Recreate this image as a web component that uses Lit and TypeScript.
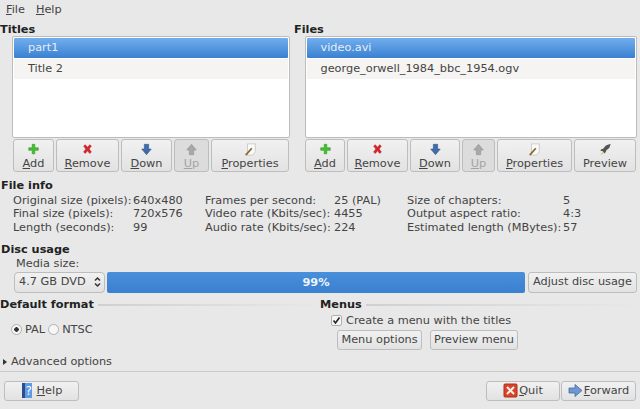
import { LitElement, html, css, svg } from 'lit';
import { customElement } from 'lit/decorators.js';

const icons: Record<string, unknown> = {
  add: svg`<path d="M6 1.500h3v4h4v3H9v4H6v-4H2v-3h4z" fill="#3fc22f" stroke="#2a8f1f" stroke-width=".6"/>`,
  remove: svg`<path d="M3 3.500 5 2l2.500 3L10 2l2 1.500L9.500 7l2.500 3.500-2 1.500-2.500-3-2.500 3-2-1.500L5.500 7z" fill="#d8252a" stroke="#a51a1e" stroke-width=".5"/>`,
  down: svg`<path d="M5 1.500h5V7h3l-5.500 6.500L2 7h3z" fill="#3f6cab" stroke="#2a4d80" stroke-width=".6"/>`,
  up: svg`<path d="M5 13.500h5V8h3L7.500 1.500 2 8h3z" fill="#a8a8a8" stroke="#8b8b8b" stroke-width=".6"/>`,
  properties: svg`<path d="M4 1h9v9l-3 4H4z" fill="#fafafa" stroke="#bbb" stroke-width=".8"/><path d="M2 14 9 6" stroke="#8a6a25" stroke-width="2"/>`,
  preview: svg`<path d="M13.500 1 8 3 4.500 7 3 7 1.500 9l3 .5L6 12l2-1.500L8 9l4-3.500z" fill="#555"/><path d="M4 10.500 1.500 14 5 12z" fill="#e6c62e"/>`,
  help: svg`<rect x="1" y="0" width="3" height="15" fill="#2d4f86"/><rect x="4" y="0" width="7" height="15" fill="#5b9be8"/><text x="4.500" y="12" font-size="12" font-family="DejaVu Sans" fill="#fff">?</text>`,
  quit: svg`<rect x="1" y="1" width="13" height="13" rx="1" fill="#d9432a" stroke="#a8301c"/><path d="M4 4l7 7M11 4l-7 7" stroke="#f3f0ea" stroke-width="2"/>`,
  forward: svg`<path d="M1 5h6V1.500L14 7.500l-7 6V10H1z" fill="#6f97cc" stroke="#3f6cab" stroke-width=".8"/>`,
};

function icon(name: string) {
  return html`<svg class="icon" width="15" height="15" viewBox="0 0 15 15">${icons[name]}</svg>`;
}

@customElement('app-root')
export class AppRoot extends LitElement {
  static styles = css`
    :host {
      display: block;
      width: 640px;
      height: 409px;
      overflow: hidden;
      background: #e8e8e8;
      color: #444;
      font: 11.3px/13.5px 'DejaVu Sans', sans-serif;
    }
    u { text-underline-offset: 1px; }
    .menubar { display: flex; gap: 11px; height: 18px; padding: 3px 0 0 6px; box-sizing: border-box; line-height: 14px; }
    .lists { display: grid; grid-template-columns: 290px 350px; column-gap: 3px; padding-top: 4px; }
    .pane-title { font-weight: bold; color: #222; height: 14px; line-height: 15px; }
    .pane-title.right { padding-left: 1px; }
    .listbox {
      box-sizing: border-box;
      margin: 0 0 0 12px;
      height: 102px;
      background: #fff;
      border: 1px solid #bcbcbc;
      border-radius: 2px;
      padding: 1px;
    }
    .files .listbox { margin-left: 11.500px; width: 332px; }
    .files .buttons { margin-left: 12px; }
    .row { height: 19.500px; line-height: 19px; padding-left: 14px; }
    .row.sel {
      height: 20px;
      background: linear-gradient(#72aeee, #3a80d0);
      color: #e4eefb;
      border-radius: 1px;
    }
    .row.alt { background: #f5f4f2; margin-top: 1px; }
    .buttons { display: flex; gap: 2px; margin: 1px 0 0 13px; }
    .btn {
      box-sizing: border-box;
      border: 1px solid #bdbdbd;
      border-radius: 3px;
      background: linear-gradient(#f1f1f1, #e2e2e2);
      color: #444;
      display: flex;
      align-items: center;
      justify-content: center;
      white-space: nowrap;
      flex: none;
    }
    .tool { height: 33px; flex-direction: column; line-height: 13px; gap: 1px; padding-top: 1px; }
    .tool .icon { height: 13px; }
    .tool.off { background: #dcdcdc; color: #a4a4a4; }
    .heading { font-weight: bold; color: #222; }
    .info { padding: 7px 0 0 1px; }
    .info-grid {
      display: grid;
      grid-template-columns: 120px 72px 129px 73px 156px 60px;
      padding-left: 12px;
      margin-top: 1px;
      white-space: nowrap;
    }
    .disc { padding: 9px 0 0 1px; }
    .media-label { padding-left: 15px; height: 14px; }
    .disc-row { display: flex; height: 21px; margin-left: 13px; gap: 2px; margin-top: 1px; }
    .combo { width: 91px; justify-content: space-between; padding: 0 3px 0 4px; border-radius: 4px; }
    .bar {
      width: 418px;
      background: linear-gradient(#4a8fdb, #3a80d0);
      color: #eef4fc;
      font-weight: bold;
      text-align: center;
      line-height: 21px;
      border-radius: 2px;
    }
    .adjust { width: 109px; margin-left: 1px; }
    .options { display: grid; grid-template-columns: 320px 320px; margin-top: 5px; height: 56px; }
    .legend { display: flex; align-items: center; gap: 4px; font-weight: bold; color: #222; height: 14px; }
    .legend i { flex: 1; height: 2px; background: linear-gradient(90deg, #d0d0d0, #e8e8e8); }
    .radios { display: flex; align-items: center; padding: 11px 0 0 11px; gap: 3px; }
    .radio { display: block; box-sizing: border-box; width: 11px; height: 11px; border: 1px solid #b0b0b0; border-radius: 50%; background: #f6f6f6; }
    .radio.on { background: radial-gradient(circle, #333 0 2px, #f6f6f6 2.500px); }
    .check-row { display: flex; align-items: center; gap: 4px; padding: 2px 0 0 11px; }
    .check { box-sizing: border-box; width: 11px; height: 11px; border: 1px solid #b0b0b0; border-radius: 2px; background: #f6f6f6; }
    .menu-buttons { display: flex; gap: 8px; padding: 3px 0 0 17px; }
    .menu-buttons .btn { height: 20px; }
    .expander { display: flex; align-items: center; gap: 4px; padding: 1px 0 0 3px; height: 14px; }
    .tri { width: 0; height: 0; border-left: 4px solid #333; border-top: 3px solid transparent; border-bottom: 3px solid transparent; }
    .sep { height: 1px; background: #c9c9c9; margin-top: 2px; }
    .footer { display: flex; padding: 9px 4px 0; gap: 1px; }
    .footer .btn { height: 20px; gap: 1px; }
    .spacer { flex: 1; }
  `;

  private tool(label: string, key: string, name: string, width: number, off = false) {
    const rest = label.slice(key.length);
    return html`<div class="btn tool ${off ? 'off' : ''}" style="width:${width}px">
      ${icon(name)}<span>${key ? html`<u>${key}</u>` : ''}${rest}</span>
    </div>`;
  }

  render() {
    return html`
      <div class="menubar"><span><u>F</u>ile</span><span><u>H</u>elp</span></div>
      <div class="lists">
        <div>
          <div class="pane-title">Titles</div>
          <div class="listbox">
            <div class="row sel">part1</div>
            <div class="row alt">Title 2</div>
          </div>
          <div class="buttons">
            ${this.tool('Add', 'A', 'add', 41)}
            ${this.tool('Remove', 'R', 'remove', 63)}
            ${this.tool('Down', 'D', 'down', 51)}
            ${this.tool('Up', 'U', 'up', 35, true)}
            ${this.tool('Properties', 'P', 'properties', 78)}
          </div>
        </div>
        <div class="files">
          <div class="pane-title right">Files</div>
          <div class="listbox">
            <div class="row sel">video.avi</div>
            <div class="row alt">george_orwell_1984_bbc_1954.ogv</div>
          </div>
          <div class="buttons">
            ${this.tool('Add', 'A', 'add', 40)}
            ${this.tool('Remove', 'R', 'remove', 61)}
            ${this.tool('Down', 'D', 'down', 50)}
            ${this.tool('Up', 'U', 'up', 33, true)}
            ${this.tool('Properties', 'P', 'properties', 75)}
            ${this.tool('Preview', '', 'preview', 62)}
          </div>
        </div>
      </div>
      <div class="info">
        <div class="heading">File info</div>
        <div class="info-grid">
          <span>Original size (pixels):</span><span>640x480</span><span>Frames per second:</span><span>25 (PAL)</span><span>Size of chapters:</span><span>5</span>
          <span>Final size (pixels):</span><span>720x576</span><span>Video rate (Kbits/sec):</span><span>4455</span><span>Output aspect ratio:</span><span>4:3</span>
          <span>Length (seconds):</span><span>99</span><span>Audio rate (Kbits/sec):</span><span>224</span><span>Estimated length (MBytes):</span><span>57</span>
        </div>
      </div>
      <div class="disc">
        <div class="heading">Disc usage</div>
        <div class="media-label">Media size:</div>
        <div class="disc-row">
          <div class="btn combo"><span>4.7 GB DVD</span>
            <svg width="7" height="12" viewBox="0 0 7 12"><path d="M1 4.500 3.500 2 6 4.500M1 7.500 3.500 10 6 7.500" fill="none" stroke="#333" stroke-width="1.500"/></svg>
          </div>
          <div class="bar">99%</div>
          <div class="btn adjust">Adjust disc usage</div>
        </div>
      </div>
      <div class="options">
        <div>
          <div class="legend"><span>Default format</span><i></i></div>
          <div class="radios">
            <b class="radio on"></b><span>PAL</span><b class="radio"></b><span>NTSC</span>
          </div>
        </div>
        <div>
          <div class="legend"><span>Menus</span><i></i></div>
          <div class="check-row">
            <span class="check">
              <svg width="9" height="9" viewBox="0 0 9 9" style="display:block"><path d="M1.500 4.500 3.500 7 7.500 1.500" fill="none" stroke="#222" stroke-width="1.600"/></svg>
            </span>
            <span>Create a menu with the titles</span>
          </div>
          <div class="menu-buttons">
            <div class="btn" style="width:85px">Menu options</div>
            <div class="btn" style="width:88px">Preview menu</div>
          </div>
        </div>
      </div>
      <div class="expander"><span class="tri"></span><span>Advanced options</span></div>
      <div class="sep"></div>
      <div class="footer">
        <div class="btn" style="width:75px">${icon('help')}<span><u>H</u>elp</span></div>
        <div class="spacer"></div>
        <div class="btn" style="width:74px">${icon('quit')}<span><u>Q</u>uit</span></div>
        <div class="btn" style="width:75px">${icon('forward')}<span><u>F</u>orward</span></div>
      </div>
    `;
  }
}
